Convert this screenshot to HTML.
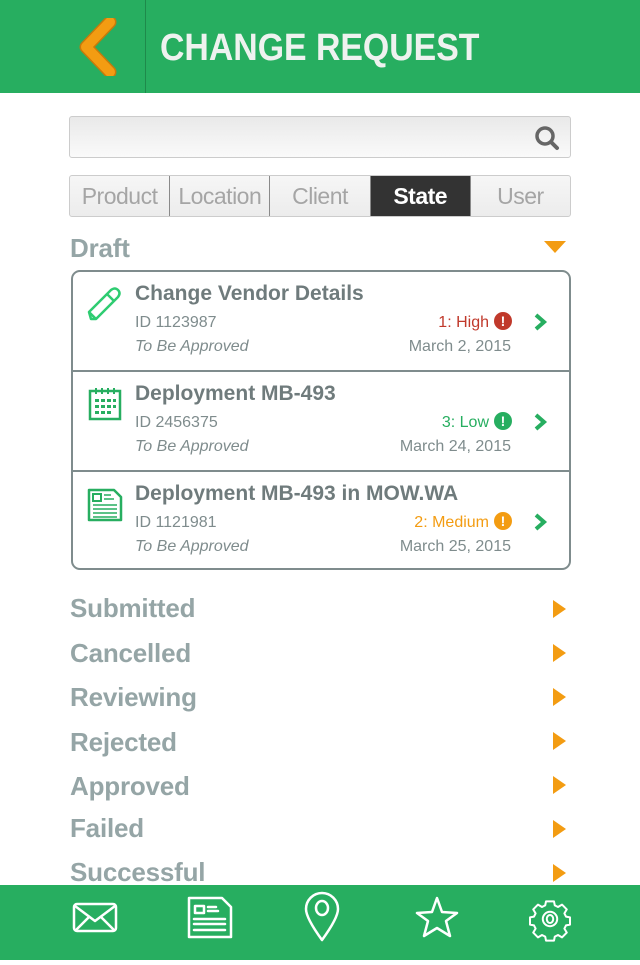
<!DOCTYPE html>
<html><head><meta charset="utf-8"><style>
*{margin:0;padding:0;box-sizing:border-box}
body{width:640px;height:960px;position:relative;overflow:hidden;background:#fff;font-family:"Liberation Sans",sans-serif}
.hdr{position:absolute;left:0;top:0;width:640px;height:93px;background:#27ae60}
.vl{position:absolute;left:145px;top:0;width:1px;height:93px;background:#1e8a4b}
.title{position:absolute;left:160px;top:27px;font-size:38px;font-weight:bold;color:#eef2ef;transform:scaleX(0.89);transform-origin:left;white-space:nowrap;letter-spacing:0}
.search{position:absolute;left:69px;top:116px;width:502px;height:42px;border:1px solid #ccc;border-radius:3px;background:linear-gradient(#e9e9e9,#fafafa)}
.tabs{position:absolute;left:69px;top:175px;width:502px;height:42px;border:1px solid #ccc;border-radius:3px;background:linear-gradient(#f6f6f6,#ececec);display:flex}
.tabs div{flex:1;text-align:center;font-size:23px;color:#a5a5a5;line-height:40px;border-right:1px solid #8a8a8a;letter-spacing:-0.5px}
.tabs div:last-child{border-right:none}
.tabs .on{background:#333;color:#fff;font-weight:bold}
.h{position:absolute;left:70px;font-size:26px;font-weight:bold;color:#95a5a6;letter-spacing:-0.2px}
.tri{position:absolute;left:553px;width:0;height:0;border-top:9px solid transparent;border-bottom:9px solid transparent;border-left:13px solid #f39c12}
.card{position:absolute;left:71px;top:270px;width:500px;height:300px;border:2px solid #7f8c8d;border-radius:9px}
.row{position:absolute;left:0;width:496px;height:100px}
.sep{border-top:2px solid #7f8c8d}
.t{position:absolute;left:62px;top:10px;font-size:21px;font-weight:bold;color:#6f7b7c;white-space:nowrap}
.id{position:absolute;left:62px;top:42px;font-size:16px;color:#7f8c8d}
.st{position:absolute;left:62px;top:66px;font-size:16px;font-style:italic;color:#7f8c8d}
.pr{position:absolute;right:80px;top:42px;font-size:16px}
.dt{position:absolute;right:58px;top:66px;font-size:16px;color:#7f8c8d}
.ex{position:absolute;left:421px;top:40px;width:18px;height:18px;border-radius:50%;color:#fff;font-weight:bold;font-size:14px;text-align:center;line-height:18px}
.ch{position:absolute;left:460px;top:40px}
.ic{position:absolute;left:14px;top:14px}
.ftr{position:absolute;left:0;top:885px;width:640px;height:75px;background:#27ae60}
</style></head><body>
<div class="hdr">
<svg style="position:absolute;left:78px;top:18px" width="42" height="58" viewBox="0 0 42 58"><path d="M32 4 L8 29 L32 54" fill="none" stroke="#c77a0a" stroke-width="13" stroke-linecap="round" stroke-linejoin="round"/><path d="M32 4 L8 29 L32 54" fill="none" stroke="#f39c12" stroke-width="10" stroke-linecap="round" stroke-linejoin="round"/></svg>
<div class="vl"></div>
<div class="title">CHANGE REQUEST</div>
</div>
<div class="search"><svg style="position:absolute;right:10px;top:8px" width="26" height="26" viewBox="0 0 26 26"><circle cx="11" cy="11" r="8" fill="none" stroke="#666" stroke-width="3.5"/><path d="M17 17 L23 23" stroke="#666" stroke-width="4" stroke-linecap="round"/></svg></div>
<div class="tabs"><div>Product</div><div>Location</div><div>Client</div><div class="on">State</div><div>User</div></div>
<div class="h" style="top:233px">Draft</div>
<div style="position:absolute;left:544px;top:241px;width:0;height:0;border-left:11px solid transparent;border-right:11px solid transparent;border-top:12px solid #f39c12"></div>
<div class="card">
<div class="row" style="top:0">
<svg class="ic" width="36" height="36" viewBox="0 0 36 36"><path d="M4 33 L2 26 L24 4 Q28 1 31 4 Q34 7 31 11 L9 33 Z M2 26 L9 33 M20 8 L27 15" fill="none" stroke="#2ecc71" stroke-width="2.5" stroke-linejoin="round"/></svg>
<div class="t">Change Vendor Details</div><div class="id">ID 1123987</div><div class="st">To Be Approved</div>
<div class="pr" style="color:#c0392b">1: High</div><div class="ex" style="background:#c0392b">!</div><div class="dt">March 2, 2015</div>
<svg class="ch" width="16" height="20" viewBox="0 0 16 20"><path d="M3 3 L11 10 L3 17" fill="none" stroke="#27ae60" stroke-width="4"/></svg>
</div>
<div class="row sep" style="top:98px">
<svg class="ic" width="36" height="36" viewBox="0 0 36 36"><rect x="3" y="5" width="30" height="28" fill="none" stroke="#27ae60" stroke-width="2.5"/><path d="M9 2v6M15 2v6M21 2v6M27 2v6" stroke="#27ae60" stroke-width="2"/><g fill="#27ae60"><rect x="8" y="13" width="4" height="3"/><rect x="14" y="13" width="4" height="3"/><rect x="20" y="13" width="4" height="3"/><rect x="26" y="13" width="3" height="3"/><rect x="8" y="19" width="4" height="3"/><rect x="14" y="19" width="4" height="3"/><rect x="20" y="19" width="4" height="3"/><rect x="26" y="19" width="3" height="3"/><rect x="8" y="25" width="4" height="3"/><rect x="14" y="25" width="4" height="3"/><rect x="20" y="25" width="4" height="3"/></g></svg>
<div class="t">Deployment MB-493</div><div class="id">ID 2456375</div><div class="st">To Be Approved</div>
<div class="pr" style="color:#27ae60">3: Low</div><div class="ex" style="background:#27ae60">!</div><div class="dt">March 24, 2015</div>
<svg class="ch" width="16" height="20" viewBox="0 0 16 20"><path d="M3 3 L11 10 L3 17" fill="none" stroke="#27ae60" stroke-width="4"/></svg>
</div>
<div class="row sep" style="top:198px">
<svg class="ic" width="36" height="36" viewBox="0 0 36 36"><path d="M2 4 H27 L34 11 V34 H2 Z" fill="none" stroke="#27ae60" stroke-width="2.5" stroke-linejoin="round"/><rect x="6" y="8" width="8" height="7" fill="none" stroke="#27ae60" stroke-width="2"/><path d="M17 9h7M17 13h10M6 19h24M6 23h24M6 27h24M6 31h24" stroke="#27ae60" stroke-width="1.6"/></svg>
<div class="t">Deployment MB-493 in MOW.WA</div><div class="id">ID 1121981</div><div class="st">To Be Approved</div>
<div class="pr" style="color:#f39c12">2: Medium</div><div class="ex" style="background:#f39c12">!</div><div class="dt">March 25, 2015</div>
<svg class="ch" width="16" height="20" viewBox="0 0 16 20"><path d="M3 3 L11 10 L3 17" fill="none" stroke="#27ae60" stroke-width="4"/></svg>
</div>
</div>
<div class="h" style="top:593px">Submitted</div><div class="tri" style="top:600px"></div>
<div class="h" style="top:638px">Cancelled</div><div class="tri" style="top:644px"></div>
<div class="h" style="top:682px">Reviewing</div><div class="tri" style="top:688px"></div>
<div class="h" style="top:727px">Rejected</div><div class="tri" style="top:732px"></div>
<div class="h" style="top:771px">Approved</div><div class="tri" style="top:776px"></div>
<div class="h" style="top:813px">Failed</div><div class="tri" style="top:820px"></div>
<div class="h" style="top:857px">Successful</div><div class="tri" style="top:864px"></div>
<div class="ftr">
<svg width="640" height="75" viewBox="0 0 640 75" fill="none" stroke="#fff" stroke-width="2.5" stroke-linejoin="round" stroke-linecap="round">
<rect x="74" y="19" width="42" height="27" rx="3"/><path d="M75 21 L95 36 L115 21 M76 45 L89 32 M114 45 L101 32"/>
<path d="M189 13 H222 L231 22 V52 H189 Z"/><rect x="195" y="21" width="9" height="7"/><path d="M208 22h8M208 26h10M194 34h31M194 39h31M194 45h31"/>
<path d="M322 55 Q306 33 306 24 A16 16 0 0 1 338 24 Q338 33 322 55 Z"/><ellipse cx="322" cy="23" rx="6" ry="7"/>
<path d="M437 13 L442 27 L457 28 L446 36 L450 51 L437 43 L424 51 L428 36 L417 28 L432 27 Z"/>
<g transform="translate(550,34) scale(0.8) translate(-550,-34)"><path d="M545 12h10l1 5 4 2 5-3 6 6-3 5 2 4 5 1v9l-5 1-2 4 3 5-6 6-5-3-4 2-1 5h-10l-1-5-4-2-5 3-6-6 3-5-2-4-5-1v-9l5-1 2-4-3-5 6-6 5 3 4-2z"/><circle cx="550" cy="34" r="9"/><ellipse cx="550" cy="34" rx="4" ry="5"/></g>
</svg>
</div>
</body></html>
